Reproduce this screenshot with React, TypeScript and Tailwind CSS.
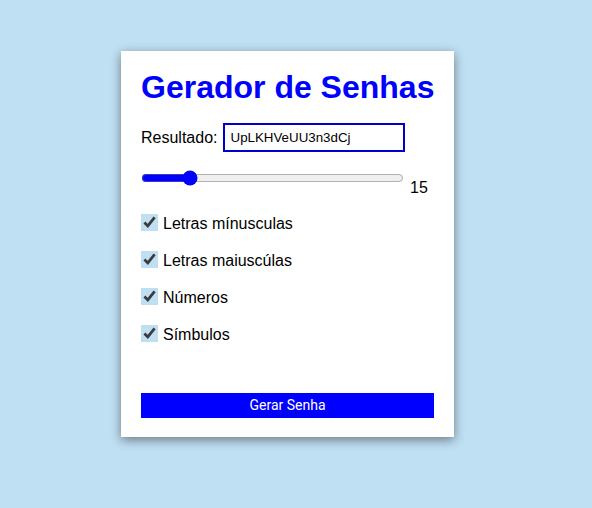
import { useState } from "react"

const options = [
  "Letras mínusculas",
  "Letras maiuscúlas",
  "Números",
  "Símbulos",
]

const App = () => {
  const [length, setLength] = useState(15)

  return (
    <div
      className="min-h-[508px] bg-[#bfdff3] pt-[51px] pl-[121px] font-['Liberation_Sans',Arial,sans-serif] text-black"
    >
      <div
        className="w-[333px] h-[386px] bg-white px-[20px] pt-[18px] shadow-[0_3px_10px_rgba(0,0,0,0.45)]"
      >
        {/* Title */}
        <h1 className="text-[32px] font-bold text-[#0000ff] leading-[37px] whitespace-nowrap">
          Gerador de Senhas
        </h1>

        {/* Result */}
        <div className="mt-[17px] flex items-center gap-[5px] text-[16px]">
          <label>Resultado:</label>
          <input
            readOnly
            value="UpLKHVeUU3n3dCj"
            className="w-[182px] h-[29px] border-2 border-[#0000cd] px-[6px] text-[13.33px] outline-none"
          />
        </div>

        {/* Length */}
        <div className="mt-[18px] flex items-end gap-[6px] text-[16px]">
          <input
            type="range"
            min={4}
            max={70}
            value={length}
            onChange={(e) => setLength(Number(e.target.value))}
            className="w-[263px] accent-[#0000ff]"
          />
          <span className="leading-[18px] -mb-[11px]">{length}</span>
        </div>

        {/* Options */}
        <div className="mt-[26px] flex flex-col gap-[17px]">
          {options.map((opt) => (
            <label key={opt} className="flex items-center gap-[5px] text-[16px] leading-[17px]">
              <input
                type="checkbox"
                defaultChecked
                className="size-[17px] m-0 accent-[#bfdff3]"
              />
              <span className="mt-[3px]">{opt}</span>
            </label>
          ))}
        </div>

        <button className="mt-[50px] w-full h-[25px] bg-[#0000ff] text-white text-[14px] font-['Roboto',sans-serif]">
          Gerar Senha
        </button>
      </div>
    </div>
  )
}

export default App
